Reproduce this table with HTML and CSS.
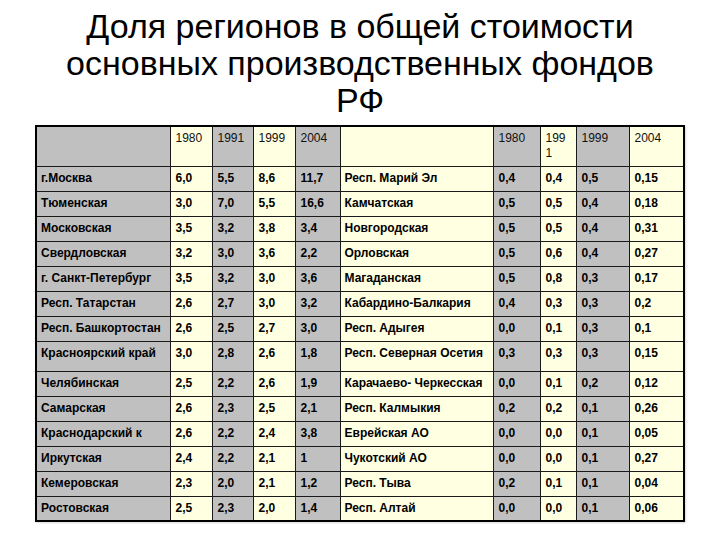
FILE: index.html
```html
<!DOCTYPE html>
<html lang="ru">
<head>
<meta charset="utf-8">
<title>Доля регионов</title>
<link rel="stylesheet" href="styles.css">
</head>
<body>
<h1 class="title">Доля регионов в общей стоимости<br>основных производственных фондов<br>РФ</h1>
<table class="grid">
<colgroup>
<col class="c1"><col class="c2"><col class="c3"><col class="c4"><col class="c5">
<col class="c6"><col class="c7"><col class="c8"><col class="c9"><col class="c10">
</colgroup>
<tr class="head">
<td class="g"></td><td class="y">1980</td><td class="g">1991</td><td class="y">1999</td><td class="g">2004</td>
<td class="y"></td><td class="g">1980</td><td class="y">199<br>1</td><td class="g">1999</td><td class="y">2004</td>
</tr>
<tr><td class="g n">г.Москва</td><td class="y">6,0</td><td class="g">5,5</td><td class="y">8,6</td><td class="g">11,7</td><td class="y n">Респ. Марий Эл</td><td class="g">0,4</td><td class="y">0,4</td><td class="g">0,5</td><td class="y">0,15</td></tr>
<tr><td class="g n">Тюменская</td><td class="y">3,0</td><td class="g">7,0</td><td class="y">5,5</td><td class="g">16,6</td><td class="y n">Камчатская</td><td class="g">0,5</td><td class="y">0,5</td><td class="g">0,4</td><td class="y">0,18</td></tr>
<tr><td class="g n">Московская</td><td class="y">3,5</td><td class="g">3,2</td><td class="y">3,8</td><td class="g">3,4</td><td class="y n">Новгородская</td><td class="g">0,5</td><td class="y">0,5</td><td class="g">0,4</td><td class="y">0,31</td></tr>
<tr><td class="g n">Свердловская</td><td class="y">3,2</td><td class="g">3,0</td><td class="y">3,6</td><td class="g">2,2</td><td class="y n">Орловская</td><td class="g">0,5</td><td class="y">0,6</td><td class="g">0,4</td><td class="y">0,27</td></tr>
<tr><td class="g n">г. Санкт-Петербург</td><td class="y">3,5</td><td class="g">3,2</td><td class="y">3,0</td><td class="g">3,6</td><td class="y n">Магаданская</td><td class="g">0,5</td><td class="y">0,8</td><td class="g">0,3</td><td class="y">0,17</td></tr>
<tr><td class="g n">Респ. Татарстан</td><td class="y">2,6</td><td class="g">2,7</td><td class="y">3,0</td><td class="g">3,2</td><td class="y n">Кабардино-Балкария</td><td class="g">0,4</td><td class="y">0,3</td><td class="g">0,3</td><td class="y">0,2</td></tr>
<tr><td class="g n">Респ. Башкортостан</td><td class="y">2,6</td><td class="g">2,5</td><td class="y">2,7</td><td class="g">3,0</td><td class="y n">Респ. Адыгея</td><td class="g">0,0</td><td class="y">0,1</td><td class="g">0,3</td><td class="y">0,1</td></tr>
<tr class="tall"><td class="g n">Красноярский край</td><td class="y">3,0</td><td class="g">2,8</td><td class="y">2,6</td><td class="g">1,8</td><td class="y n">Респ. Северная Осетия</td><td class="g">0,3</td><td class="y">0,3</td><td class="g">0,3</td><td class="y">0,15</td></tr>
<tr><td class="g n">Челябинская</td><td class="y">2,5</td><td class="g">2,2</td><td class="y">2,6</td><td class="g">1,9</td><td class="y n">Карачаево- Черкесская</td><td class="g">0,0</td><td class="y">0,1</td><td class="g">0,2</td><td class="y">0,12</td></tr>
<tr><td class="g n">Самарская</td><td class="y">2,6</td><td class="g">2,3</td><td class="y">2,5</td><td class="g">2,1</td><td class="y n">Респ. Калмыкия</td><td class="g">0,2</td><td class="y">0,2</td><td class="g">0,1</td><td class="y">0,26</td></tr>
<tr><td class="g n">Краснодарский к</td><td class="y">2,6</td><td class="g">2,2</td><td class="y">2,4</td><td class="g">3,8</td><td class="y n">Еврейская АО</td><td class="g">0,0</td><td class="y">0,0</td><td class="g">0,1</td><td class="y">0,05</td></tr>
<tr><td class="g n">Иркутская</td><td class="y">2,4</td><td class="g">2,2</td><td class="y">2,1</td><td class="g">1</td><td class="y n">Чукотский АО</td><td class="g">0,0</td><td class="y">0,0</td><td class="g">0,1</td><td class="y">0,27</td></tr>
<tr><td class="g n">Кемеровская</td><td class="y">2,3</td><td class="g">2,0</td><td class="y">2,1</td><td class="g">1,2</td><td class="y n">Респ. Тыва</td><td class="g">0,2</td><td class="y">0,1</td><td class="g">0,1</td><td class="y">0,04</td></tr>
<tr><td class="g n">Ростовская</td><td class="y">2,5</td><td class="g">2,3</td><td class="y">2,0</td><td class="g">1,4</td><td class="y n">Респ. Алтай</td><td class="g">0,0</td><td class="y">0,0</td><td class="g">0,1</td><td class="y">0,06</td></tr>
</table>
</body>
</html>
```
FILE: styles.css
```css
html, body {
  margin: 0;
  padding: 0;
  background: #ffffff;
}
body {
  width: 720px;
  height: 540px;
  overflow: hidden;
  font-family: "Liberation Sans", Arial, sans-serif;
}
.title {
  margin: 0;
  padding-top: 8px;
  font-size: 34px;
  line-height: 37px;
  font-weight: normal;
  text-align: center;
  color: #000;
}
.grid {
  margin: 6px 0 0 35px;
  border-collapse: collapse;
  table-layout: fixed;
  width: 650px;
  border: 2px solid #000;
  box-shadow: 1px 1px 2px rgba(0,0,0,0.15);
}
.c1 { width: 134px; }
.c2 { width: 42px; }
.c3 { width: 41px; }
.c4 { width: 42px; }
.c5 { width: 45px; }
.c6 { width: 153px; }
.c7 { width: 47px; }
.c8 { width: 36px; }
.c9 { width: 53px; }
.c10 { width: 55px; }
.grid td {
  border: 1px solid #1a1a1a;
  height: 25px;
  box-sizing: border-box;
  padding: 5px 3px 0 5px;
  vertical-align: top;
  font-size: 12px;
  line-height: 13px;
  font-weight: bold;
  color: #000;
  white-space: nowrap;
  overflow: hidden;
}
.grid .head td {
  height: 40px;
  font-weight: normal;
  padding-top: 4px;
  line-height: 15px;
  color: #111;
}
.grid .tall td {
  height: 30px;
}
.grid td.n {
  padding-left: 4px;
}
.g { background: #c0c0c0; }
.y { background: #ffffe1; }
```
